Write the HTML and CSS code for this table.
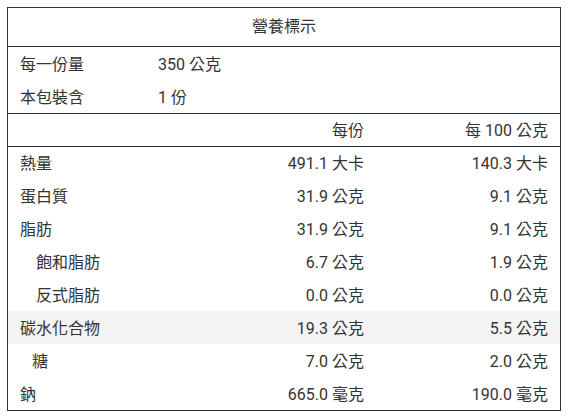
FILE: index.html
```html
<!DOCTYPE html>
<html lang="zh-Hant">
<head>
<meta charset="utf-8">
<link rel="stylesheet" href="styles.css">
</head>
<body>
<div class="label">
  <div class="title">營養標示</div>
  <div class="info">
    <div class="info-row"><span class="info-key">每一份量</span><span>350 公克</span></div>
    <div class="info-row"><span class="info-key">本包裝含</span><span>1 份</span></div>
  </div>
  <div class="head row">
    <span></span><span class="num">每份</span><span class="num">每 100 公克</span>
  </div>
  <div class="rows">
    <div class="row"><span>熱量</span><span class="num">491.1 大卡</span><span class="num">140.3 大卡</span></div>
    <div class="row"><span>蛋白質</span><span class="num">31.9 公克</span><span class="num">9.1 公克</span></div>
    <div class="row"><span>脂肪</span><span class="num">31.9 公克</span><span class="num">9.1 公克</span></div>
    <div class="row"><span class="sub">飽和脂肪</span><span class="num">6.7 公克</span><span class="num">1.9 公克</span></div>
    <div class="row"><span class="sub">反式脂肪</span><span class="num">0.0 公克</span><span class="num">0.0 公克</span></div>
    <div class="row shaded"><span>碳水化合物</span><span class="num">19.3 公克</span><span class="num">5.5 公克</span></div>
    <div class="row"><span class="sub2">糖</span><span class="num">7.0 公克</span><span class="num">2.0 公克</span></div>
    <div class="row"><span>鈉</span><span class="num">665.0 毫克</span><span class="num">190.0 毫克</span></div>
  </div>
</div>
</body>
</html>
```
FILE: styles.css
```css
html, body { margin: 0; background: #fff; }
body { padding: 7px; }
.label {
  width: 554px;
  height: 404px;
  box-sizing: border-box;
  border: 1px solid #2c343c;
  font-family: Roboto, "Noto Sans CJK TC", sans-serif;
  font-size: 16px;
  line-height: 20px;
  color: #333;
  display: flex;
  flex-direction: column;
}
.title {
  height: 39px;
  box-sizing: border-box;
  display: flex;
  align-items: center;
  justify-content: center;
  border-bottom: 1px solid #2c343c;
}
.info { border-bottom: 1px solid #2c343c; }
.info-row {
  height: 33px;
  box-sizing: border-box;
  padding: 2px 0 0 12px;
  display: flex;
  align-items: center;
}
.info-key { width: 138px; }
.row {
  display: grid;
  grid-template-columns: 1fr 150px 184px;
  align-items: center;
  height: 33px;
  box-sizing: border-box;
  padding: 2px 12px 0;
}
.row > span { white-space: nowrap; }
.head { border-bottom: 1px solid #2c343c; }
.num { text-align: right; }
.rows { flex: 1; display: flex; flex-direction: column; }
.rows .row { flex: 1; height: auto; }
.sub { padding-left: 16px; }
.sub2 { padding-left: 12px; }
.shaded { background: #f4f4f4; }
```
